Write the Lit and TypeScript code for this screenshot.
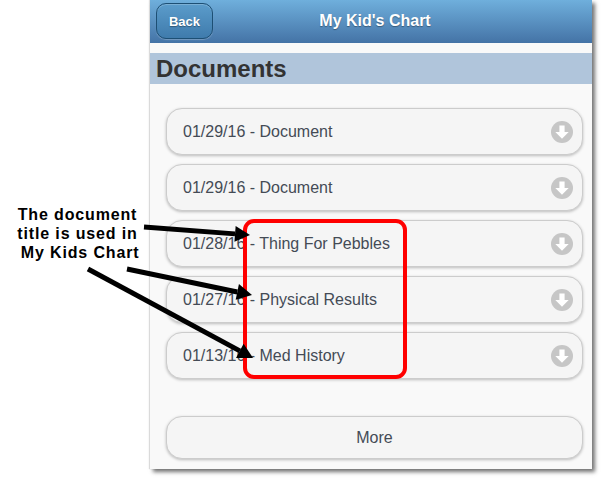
import { LitElement, html, css, svg } from "lit";
import { customElement } from "lit/decorators.js";

const rows = ["01/29/16 - Document", "01/29/16 - Document", "01/28/16 - Thing For Pebbles", "01/27/16 - Physical Results", "01/13/16 - Med History"];

const arrow = (x1: number, y1: number, x2: number, y2: number) => {
  const a = Math.atan2(y2 - y1, x2 - x1);
  const len = 15, hw = 8;
  const bx = x2 - len * Math.cos(a), by = y2 - len * Math.sin(a);
  const nx = -Math.sin(a) * hw, ny = Math.cos(a) * hw;
  return svg`<line x1=${x1} y1=${y1} x2=${bx} y2=${by} stroke="#000" stroke-width="5"></line>
    <polygon points="${x2},${y2} ${bx + nx},${by + ny} ${bx - nx},${by - ny}" fill="#000"></polygon>`;
};

@customElement("app-root")
export class AppRoot extends LitElement {
  static styles = css`
    :host { display: block; position: relative; width: 602px; height: 479px; background: #fff; overflow: hidden; font-family: "Liberation Sans", Arial, sans-serif; }
    .panel { width: 442px; height: 469px; margin-left: 150px; box-sizing: border-box; background: #f9f9f9; box-shadow: 3px 3px 4px rgba(0,0,0,.55), -1px 0 1px rgba(0,0,0,.12); display: flex; flex-direction: column; }
    .header { height: 43px; flex: none; background: linear-gradient(#6fafdc, #4473a6); display: grid; grid-template-columns: 1fr auto 1fr; align-items: center; padding: 0 6px; box-sizing: border-box; }
    .back { justify-self: start; width: 57px; height: 36px; box-sizing: border-box; margin-top: -1px; border: 1px solid #1d4f74; border-radius: 10px; background: linear-gradient(#5b9ccb, #3f7bac); color: #fff; font-weight: bold; font-size: 13px; display: flex; align-items: center; justify-content: center; text-shadow: 0 1px 1px rgba(0,0,0,.35); box-shadow: inset 0 1px 0 rgba(255,255,255,.2), 0 1px 1px rgba(255,255,255,.25); }
    .title { color: #fff; font-weight: bold; font-size: 16px; text-shadow: 0 1px 1px rgba(0,0,0,.35); margin-top: -1px; position: relative; left: 4px; }
    .section { margin-top: 10px; height: 31px; flex: none; background: #b0c5db; color: #333; font-weight: bold; font-size: 24px; line-height: 31px; padding-left: 6px; }
    .list { display: flex; flex-direction: column; gap: 9px; padding: 24px 9px 0 16px; }
    .row, .more { box-sizing: border-box; height: 47px; border: 1px solid #ccc; border-radius: 16px; background: #f5f5f5; box-shadow: 0 1px 3px rgba(0,0,0,.25); color: #444b55; font-size: 16px; display: flex; align-items: center; }
    .row { padding: 0 9px 0 16px; justify-content: space-between; }
    .more { height: 43px; justify-content: center; margin: 37px 9px 0 16px; }
    .ic { width: 22px; height: 22px; display: block; }
    .red { position: absolute; left: 243px; top: 219px; width: 164px; height: 160px; box-sizing: border-box; border: 4px solid #f00; border-radius: 11px; }
    .arrows { position: absolute; left: 0; top: 0; }
    .note { position: absolute; left: 9px; top: 205px; width: 137px; text-align: center; font-weight: bold; font-size: 16px; line-height: 19px; letter-spacing: .85px; color: #000; }
  `;
  render() {
    return html`
      <div class="panel">
        <div class="header"><div class="back">Back</div><div class="title">My Kid's Chart</div><div></div></div>
        <div class="section">Documents</div>
        <div class="list">
          ${rows.map((r) => html`<div class="row"><span>${r}</span>
            <svg class="ic" viewBox="0 0 22 22"><circle cx="11" cy="11" r="11" fill="#c6c6c6"></circle><path d="M8.4 4.5h5.2v6.5h4.1L11 17.8 4.3 11h4.1z" fill="#fff"></path></svg></div>`)}
        </div>
        <div class="more">More</div>
      </div>
      <div class="red"></div>
      <svg class="arrows" width="602" height="479">
        ${arrow(144, 227, 250, 235)}
        ${arrow(127, 269, 252, 295)}
        ${arrow(88, 269, 253, 358)}
      </svg>
      <div class="note">The document<br />title is used in<br />&nbsp;My Kids Chart</div>
    `;
  }
}
